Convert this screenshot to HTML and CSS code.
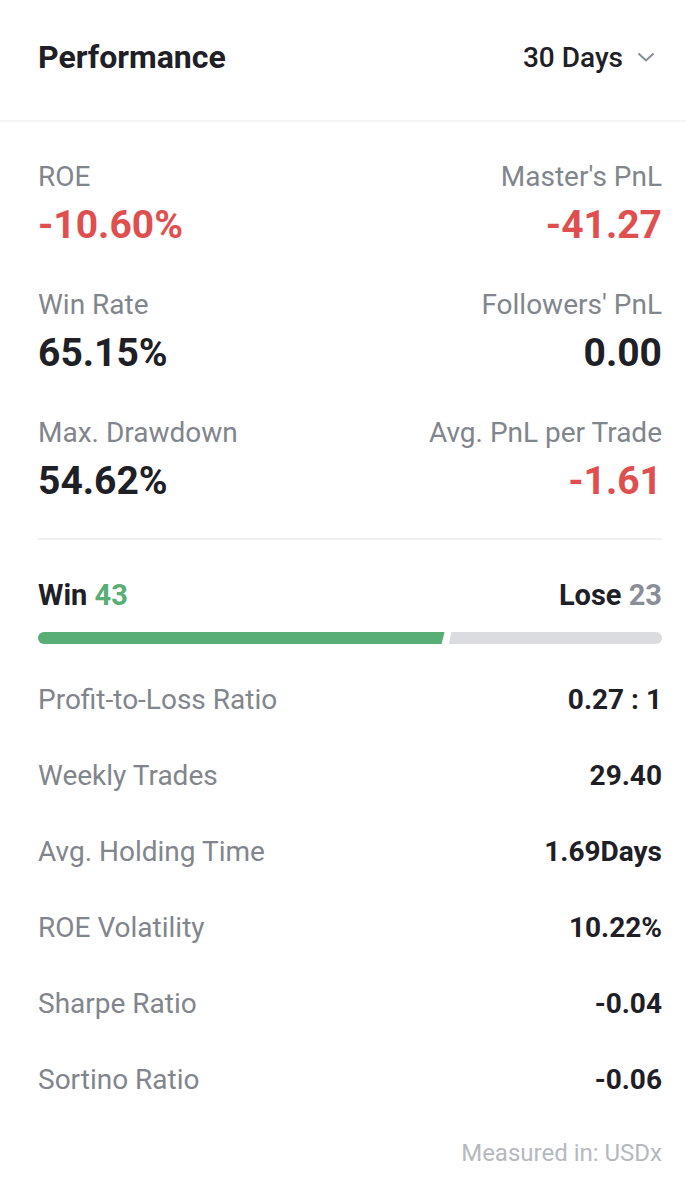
FILE: index.html
```html
<!DOCTYPE html>
<html lang="en">
<head>
  <meta charset="UTF-8">
  <meta name="viewport" content="width=device-width, initial-scale=1.0">
  <title>Performance</title>
  <link rel="stylesheet" href="styles.css">
</head>
<body>
  <div class="card">
    <div class="header">
      <div class="title">Performance</div>
      <div class="period">
        30 Days
        <svg class="chevron" width="18" height="10" viewBox="0 0 18 10">
          <path d="M1.5 1.5 L9 8.5 L16.5 1.5" fill="none" stroke="#848e9c" stroke-width="2"/>
        </svg>
      </div>
    </div>

    <div class="content">
      <div class="stats">
        <div class="stat">
          <div class="stat-label">ROE</div>
          <div class="stat-value red">-10.60%</div>
        </div>
        <div class="stat right">
          <div class="stat-label">Master's PnL</div>
          <div class="stat-value red">-41.27</div>
        </div>
        <div class="stat">
          <div class="stat-label">Win Rate</div>
          <div class="stat-value">65.15%</div>
        </div>
        <div class="stat right">
          <div class="stat-label">Followers' PnL</div>
          <div class="stat-value">0.00</div>
        </div>
        <div class="stat">
          <div class="stat-label">Max. Drawdown</div>
          <div class="stat-value">54.62%</div>
        </div>
        <div class="stat right">
          <div class="stat-label">Avg. PnL per Trade</div>
          <div class="stat-value red">-1.61</div>
        </div>
      </div>

      <div class="winlose">
        <div>Win <span class="green">43</span></div>
        <div>Lose <span class="muted">23</span></div>
      </div>
      <div class="bar">
        <div class="bar-win" style="flex-basis: 65.15%"></div>
        <div class="bar-lose"></div>
      </div>

      <div class="rows">
        <div class="row"><span class="row-label">Profit-to-Loss Ratio</span><span class="row-value">0.27 : 1</span></div>
        <div class="row"><span class="row-label">Weekly Trades</span><span class="row-value">29.40</span></div>
        <div class="row"><span class="row-label">Avg. Holding Time</span><span class="row-value">1.69Days</span></div>
        <div class="row"><span class="row-label">ROE Volatility</span><span class="row-value">10.22%</span></div>
        <div class="row"><span class="row-label">Sharpe Ratio</span><span class="row-value">-0.04</span></div>
        <div class="row"><span class="row-label">Sortino Ratio</span><span class="row-value">-0.06</span></div>
      </div>

      <div class="footer">Measured in: USDx</div>
    </div>
  </div>
</body>
</html>
```

FILE: styles.css
```css
body, html {
  margin: 0;
  padding: 0;
  background-color: #ffffff;
  font-family: Roboto, "Liberation Sans", sans-serif;
  color: #1e2026;
}

.header {
  height: 114px;
  display: flex;
  justify-content: space-between;
  align-items: center;
  padding: 0 24px 6px 38px;
  border-bottom: 2px solid #f5f5f5;
}

.title {
  font-size: 32px;
  font-weight: 700;
}

.period {
  display: flex;
  align-items: center;
  gap: 14px;
  font-size: 28px;
  font-weight: 500;
  padding-right: 7px;
}

.content {
  padding: 0 24px 0 38px;
}

.stats {
  display: grid;
  grid-template-columns: 1fr 1fr;
  row-gap: 38px;
  padding: 37px 0 33px;
  border-bottom: 2px solid #f0f0f0;
}

.stat {
  display: flex;
  flex-direction: column;
  gap: 6px;
}

.stat.right {
  align-items: flex-end;
}

.stat-label {
  font-size: 28px;
  line-height: 36px;
  color: #81858c;
}

.stat-value {
  font-size: 39px;
  line-height: 48px;
  font-weight: 700;
}

.red {
  color: #e04f4f;
}

.green {
  color: #58ae74;
}

.muted {
  color: #8a8e96;
}

.winlose {
  display: flex;
  justify-content: space-between;
  margin-top: 37px;
  font-size: 29px;
  line-height: 36px;
  font-weight: 700;
}

.bar {
  display: flex;
  gap: 4px;
  height: 12px;
  margin-top: 19px;
}

.bar-win {
  flex-shrink: 0;
  background-color: #58ae74;
  border-radius: 6px 0 0 6px;
  clip-path: polygon(0 0, 100% 0, calc(100% - 3px) 100%, 0 100%);
}

.bar-lose {
  flex: 1;
  background-color: #dadcdf;
  border-radius: 0 6px 6px 0;
  clip-path: polygon(3px 0, 100% 0, 100% 100%, 0 100%);
}

.rows {
  display: flex;
  flex-direction: column;
  gap: 40px;
  margin-top: 38px;
}

.row {
  display: flex;
  justify-content: space-between;
  font-size: 28px;
  line-height: 36px;
}

.row-label {
  color: #81858c;
}

.row-value {
  font-weight: 700;
}

.footer {
  margin-top: 40px;
  text-align: right;
  font-size: 24px;
  line-height: 30px;
  color: #b5b9bf;
}
```
